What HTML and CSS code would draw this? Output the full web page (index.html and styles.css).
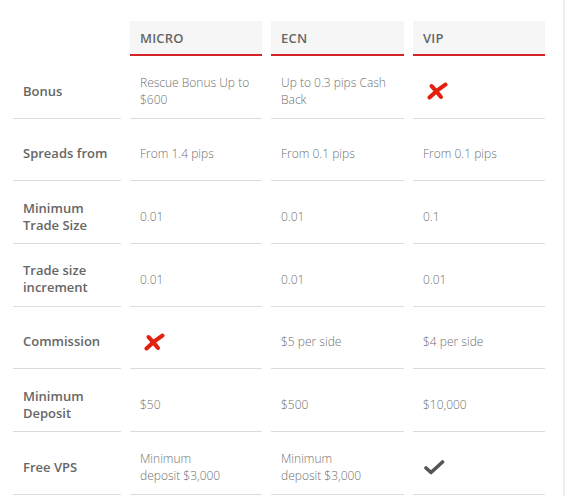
FILE: index.html
```html
<!DOCTYPE html>
<html lang="en">
<head>
  <meta charset="UTF-8" />
  <meta name="viewport" content="width=device-width, initial-scale=1.0" />
  <title>Account types</title>
  <link rel="stylesheet" href="styles.css">
</head>
<body>
  <div class="page">
    <table class="accounts">
      <colgroup>
        <col class="c-label">
        <col class="c-micro">
        <col class="c-ecn">
        <col class="c-vip">
      </colgroup>
      <thead>
        <tr>
          <th class="blank"></th>
          <th>Micro</th>
          <th>ECN</th>
          <th>VIP</th>
        </tr>
      </thead>
      <tbody>
        <tr>
          <td class="label">Bonus</td>
          <td>Rescue Bonus Up to<br>$600</td>
          <td>Up to 0.3 pips Cash<br>Back</td>
          <td>
            <svg class="icon no" width="22" height="18" viewBox="0 0 22 18"><path d="M19.5 2.5 C14 6 8 11 3.5 15.5" /><path d="M5.5 4 C9 7.5 12 11.5 15 15" /></svg>
          </td>
        </tr>
        <tr>
          <td class="label">Spreads from</td>
          <td>From 1.4 pips</td>
          <td>From 0.1 pips</td>
          <td>From 0.1 pips</td>
        </tr>
        <tr>
          <td class="label">Minimum<br>Trade Size</td>
          <td>0.01</td>
          <td>0.01</td>
          <td>0.1</td>
        </tr>
        <tr>
          <td class="label">Trade size<br>increment</td>
          <td>0.01</td>
          <td>0.01</td>
          <td>0.01</td>
        </tr>
        <tr>
          <td class="label">Commission</td>
          <td>
            <svg class="icon no" width="22" height="18" viewBox="0 0 22 18"><path d="M19.5 2.5 C14 6 8 11 3.5 15.5" /><path d="M5.5 4 C9 7.5 12 11.5 15 15" /></svg>
          </td>
          <td>$5 per side</td>
          <td>$4 per side</td>
        </tr>
        <tr>
          <td class="label">Minimum<br>Deposit</td>
          <td>$50</td>
          <td>$500</td>
          <td>$10,000</td>
        </tr>
        <tr>
          <td class="label">Free VPS</td>
          <td>Minimum<br>deposit $3,000</td>
          <td>Minimum<br>deposit $3,000</td>
          <td>
            <svg class="icon yes" width="22" height="16" viewBox="0 0 22 16"><path d="M3 9 L8 13.5 L19.5 3" /></svg>
          </td>
        </tr>
      </tbody>
    </table>
  </div>
</body>
</html>
```

FILE: styles.css
```css
body {
  margin: 0;
  font-family: 'Open Sans', sans-serif;
  background: #fff;
}
.page {
  width: 563px;
  height: 496px;
  border-right: 2px solid #efefef;
  overflow: hidden;
}
.accounts {
  margin: 21px 0 0 4px;
  border-collapse: separate;
  border-spacing: 9px 0;
  table-layout: fixed;
  width: 550px;
}
.c-label { width: 108px; }
.c-micro { width: 132px; }
.c-ecn { width: 133px; }
.c-vip { width: 132px; }
.accounts th {
  background: #f6f6f6;
  border-bottom: 2px solid #d2232a;
  height: 33px;
  padding: 0 10px;
  text-align: left;
  text-transform: uppercase;
  font-size: 13px;
  font-weight: 600;
  color: #666;
  letter-spacing: 0.2px;
}
.accounts th.blank {
  background: none;
  border-bottom: none;
}
.accounts td {
  height: 62.67px;
  padding: 9px 10px 0;
  box-sizing: border-box;
  border-bottom: 1px solid #dcdcdc;
  font-size: 12px;
  font-weight: 300;
  line-height: 17px;
  color: #6f6f6f;
  vertical-align: middle;
}
.accounts td.label {
  font-size: 13px;
  font-weight: 600;
  color: #666;
}
.icon {
  display: block;
  fill: none;
  stroke-linecap: round;
  stroke-linejoin: round;
}
.icon.no {
  stroke: #e3200f;
  stroke-width: 4;
  margin-left: 3px;
}
.icon.yes {
  stroke: #555;
  stroke-width: 3.6;
}
```
